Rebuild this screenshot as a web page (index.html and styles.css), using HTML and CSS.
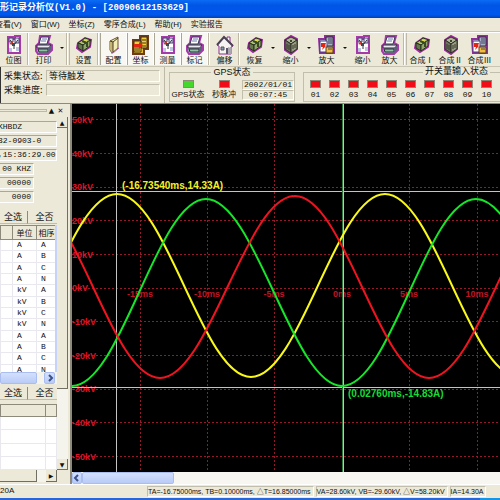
FILE: index.html
```html
<!DOCTYPE html>
<html lang="zh-CN">
<head>
  <meta charset="UTF-8" />
  <meta name="viewport" content="width=device-width, initial-scale=1.0"/>
  <title>波形记录分析仪(V1.0)</title>
  <link rel="stylesheet" href="styles.css">
</head>
<body>

  <!-- Toolbar icons -->
  <svg class="icon-defs" width="0" height="0" aria-hidden="true">
    <symbol id="ic-bitmap" viewBox="0 0 18 20">
      <path d="M3 2h5v2h2V1h5v17H3z" fill="#fff" stroke="#a53aa8" stroke-width="2"/>
      <path d="M4 3h4v4H4zM10 3h4v5h-4z" fill="#dcdff0" stroke="#4a4470"/>
      <path d="M5 5l4 5 4-5M9 9v5" fill="none" stroke="#30343c" stroke-width="1"/>
      <path d="M4 9l4-3v4z" fill="#e03020"/>
      <path d="M7 8h3v3H7z" fill="#3a4c50"/>
      <path d="M11 13h3M11 15h3M4 14h3M4 16h3" stroke="#7a8fc0"/>
    </symbol>
    <symbol id="ic-print" viewBox="0 0 18 20">
      <path d="M5 1h10l-2 7 4 2v5l-4 4H3l-2-3v-5l3-3z" fill="#9aa0b8" stroke="#a53aa8" stroke-width="2"/>
      <path d="M6 2h8l-2 7H4z" fill="#fff" stroke="#3b3558"/>
      <path d="M7 4h5M6 6h5" stroke="#6a79b0"/>
      <path d="M2 10h14l-2 3H2z" fill="#e9e9ef" stroke="#2c2c38"/>
      <path d="M3 14h10v3H4z" fill="#8fc2a0" stroke="#2c2c38"/>
      <path d="M13 13l3-2v4l-3 3z" fill="#596077"/>
    </symbol>
    <symbol id="ic-box" viewBox="0 0 18 20">
      <path d="M3 8l7-5 6 2-1 7-8 5-5-4z" fill="#76905a" stroke="#a62aa8" stroke-width="2"/>
      <path d="M3 8l7-5 6 2-8 5z" fill="#b5c878" stroke="#25301c"/>
      <path d="M3 8l5 2v6l-5-3z" fill="#65774f" stroke="#25301c"/>
      <path d="M8 10l7-5v6l-7 5z" fill="#93a866" stroke="#25301c"/>
      <path d="M7 6l5 2v4" fill="none" stroke="#384a22" stroke-width="2"/>
      <path d="M9 5l3 1" stroke="#f0de48"/>
    </symbol>
    <symbol id="ic-config" viewBox="0 0 18 20">
      <path d="M5 6l8-4v11l-6 5-2-3z" fill="#f3eeb5" stroke="#6b5330" stroke-width="1"/>
      <path d="M5 6l3 1v10l-3-2z" fill="#c4b573"/>
      <path d="M5 6l3 1 5-4M8 7v10" fill="none" stroke="#4a3d28"/>
      <path d="M6 18h2l6-5" fill="none" stroke="#b05ab0"/>
    </symbol>
    <symbol id="ic-axis" viewBox="0 0 18 20">
      <path d="M1 5h7V1h8v13h-4v5H1z" fill="#e4b82c" stroke="#6e3b18" stroke-width="2"/>
      <path d="M9 2h6v11H9zM2 6h7v11H2z" fill="#f5cf3a" stroke="#44301a"/>
      <path d="M10 5h4M10 8h4M10 11h4M3 13h5M3 15h5" stroke="#44301a"/>
      <path d="M2 9h5V7l4 3-4 4v-2H2z" fill="#e32614"/>
    </symbol>
    <symbol id="ic-house" viewBox="0 0 18 20">
      <path d="M1 10l7-8 3 3V2h3v5l3 4-2 1v7H3v-8z" fill="#f5f4f2" stroke="#8e2f96" stroke-width="1"/>
      <path d="M1 10l7-8 9 9" fill="none" stroke="#4a4054" stroke-width="2"/>
      <path d="M12 12l3 1v6h-4z" fill="#aaa7b0"/>
      <path d="M5 12h3v3H5z" fill="#8a96b8" stroke="#555"/>
      <path d="M10 13h2v6h-2z" fill="#5c566a"/>
    </symbol>
    <symbol id="ic-cube" viewBox="0 0 18 20">
      <path d="M3 5l6-4 6 3v10l-6 5-6-4z" fill="#858a72" stroke="#9a2a9c" stroke-width="2"/>
      <path d="M3 5l6-3 6 3-6 4z" fill="#b2b699" stroke="#2c2f24"/>
      <path d="M3 5l6 4v9l-6-4z" fill="#6e735e" stroke="#2c2f24"/>
      <path d="M9 9l6-4v9l-6 4z" fill="#979c80" stroke="#2c2f24"/>
      <path d="M5 9v5M7 10v5M11 10v4M13 9v4" stroke="#34382a"/>
      <path d="M8 5h2v2H8z" fill="#3e4630"/>
    </symbol>
    <symbol id="ic-pages" viewBox="0 0 18 20">
      <path d="M1 4h6V1h9v17H2z" fill="#c7cde3" stroke="#8e2f9a" stroke-width="2"/>
      <path d="M8 2h7v9H8z" fill="#aab2c8" stroke="#2c2c38"/>
      <path d="M2 6h7v11H2z" fill="#fff" stroke="#4a3f80"/>
      <path d="M8 12h7v6H8z" fill="#f2bd3c" stroke="#5d3a20"/>
      <path d="M10 4h4M10 6h4M10 8h4M10 14h4" stroke="#3d4258"/>
      <path d="M3 8h5l-1 3 2-1-5 5 1-3H3z" fill="#e32614"/>
    </symbol>
  </svg>

  <header class="titlebar"><h1>形记录分析仪(V1.0) - [20090612153629]</h1></header>

  <nav class="menubar">
    <a href="#">查看(V)</a>
    <a href="#">窗口(W)</a>
    <a href="#">坐标(Z)</a>
    <a href="#">零序合成(L)</a>
    <a href="#">帮助(H)</a>
    <a href="#">实验报告</a>
  </nav>

  <div class="toolbar">
    <button class="tool"><svg><use href="#ic-bitmap"/></svg>位图</button>
    <i class="sep"></i>
    <button class="tool"><svg><use href="#ic-print"/></svg>打印</button>
    <button class="drop" aria-label="打印选项"></button>
    <i class="sep double"></i>
    <button class="tool"><svg><use href="#ic-box"/></svg>设置</button>
    <i class="sep"></i>
    <button class="tool on"><svg><use href="#ic-config"/></svg>配置</button>
    <button class="tool on"><svg><use href="#ic-axis"/></svg>坐标</button>
    <button class="tool on"><svg><use href="#ic-bitmap"/></svg>测量</button>
    <button class="tool on"><svg><use href="#ic-print"/></svg>标记</button>
    <i class="sep"></i>
    <button class="tool"><svg><use href="#ic-house"/></svg>偏移</button>
    <i class="sep"></i>
    <button class="tool"><svg><use href="#ic-box"/></svg>恢复</button>
    <button class="drop" aria-label="恢复选项"></button>
    <button class="tool"><svg><use href="#ic-cube"/></svg>缩小</button>
    <button class="drop" aria-label="缩小选项"></button>
    <button class="tool"><svg><use href="#ic-pages"/></svg>放大</button>
    <button class="drop" aria-label="放大选项"></button>
    <button class="tool"><svg><use href="#ic-bitmap"/></svg>缩小</button>
    <button class="tool"><svg><use href="#ic-print"/></svg>放大</button>
    <i class="sep double"></i>
    <button class="tool wide"><svg><use href="#ic-box"/></svg>合成Ⅰ</button>
    <button class="tool wide"><svg><use href="#ic-cube"/></svg>合成Ⅱ</button>
    <button class="tool wide"><svg><use href="#ic-pages"/></svg>合成Ⅲ</button>
  </div>

  <section class="infobar">
    <div class="collect">
      <label for="state">采集状态:</label><input id="state" value="等待触发" readonly>
      <label for="progress">采集进度:</label><input id="progress" readonly>
    </div>
    <fieldset class="group gps">
      <legend>GPS状态</legend>
      <div class="lamp"><i class="led green"></i>GPS状态</div>
      <div class="lamp"><i class="led"></i>秒脉冲</div>
      <div class="clock">
        <input value="2002/01/01" aria-label="日期" readonly>
        <input value="00:07:45" aria-label="时间" readonly>
      </div>
    </fieldset>
    <fieldset class="group inputs">
      <legend>开关量输入状态</legend>
      <div class="lamp"><i class="led"></i>01</div>
      <div class="lamp"><i class="led"></i>02</div>
      <div class="lamp"><i class="led"></i>03</div>
      <div class="lamp"><i class="led"></i>04</div>
      <div class="lamp"><i class="led"></i>05</div>
      <div class="lamp"><i class="led"></i>06</div>
      <div class="lamp"><i class="led"></i>07</div>
      <div class="lamp"><i class="led"></i>08</div>
      <div class="lamp"><i class="led"></i>09</div>
      <div class="lamp"><i class="led"></i>10</div>
      <div class="lamp"><i class="led"></i></div>
    </fieldset>
  </section>

  <main class="work">
    <aside class="side">
      <div class="grip"><i></i><button aria-label="折叠">▲</button><button aria-label="关闭">✕</button></div>
      <div class="side-body">
        <div class="side-content">
          <div class="fields">
            <input class="cut" value="KHBDZ" aria-label="站名" readonly>
            <input class="cut" value="32-0903-0" aria-label="编号" readonly>
            <input class="cut" value=",15:36:29.00" aria-label="时间" readonly>
            <input class="short" value="00 KHZ" aria-label="采样频率" readonly>
            <input class="short" value="00000" aria-label="点数" readonly>
            <input class="short" value="0000" aria-label="长度" readonly>
          </div>
          <div class="pick"><button>全选</button><button>全否</button></div>
          <div class="grid-box">
            <table class="channels">
              <thead><tr><th></th><th>单位</th><th>相序</th></tr></thead>
              <tbody>
                <tr><td></td><td>A</td><td>A</td></tr>
                <tr><td></td><td>A</td><td>B</td></tr>
                <tr><td></td><td>A</td><td>C</td></tr>
                <tr><td></td><td>A</td><td>N</td></tr>
                <tr><td></td><td>kV</td><td>A</td></tr>
                <tr><td></td><td>kV</td><td>B</td></tr>
                <tr><td></td><td>kV</td><td>C</td></tr>
                <tr><td></td><td>kV</td><td>N</td></tr>
                <tr><td></td><td>A</td><td>A</td></tr>
                <tr><td></td><td>A</td><td>B</td></tr>
                <tr><td></td><td>A</td><td>C</td></tr>
                <tr><td></td><td>A</td><td>N</td></tr>
              </tbody>
            </table>
          </div>
          <div class="hbar blue"><i></i><button aria-label="向右"><svg viewBox="0 0 8 8"><path d="M3 1l3 3-3 3"/></svg></button></div>
          <div class="pick low"><button>全选</button><button>全否</button></div>
          <table class="switches">
            <thead><tr><th></th><th></th></tr></thead>
            <tbody>
              <tr><td></td><td></td></tr>
              <tr><td></td><td></td></tr>
              <tr><td></td><td></td></tr>
              <tr><td></td><td></td></tr>
            </tbody>
          </table>
          <div class="hbar"><i></i><button aria-label="向右">▶</button></div>
        </div>
        <div class="vbar"><button aria-label="向上">▲</button><i></i><button aria-label="向下">▼</button></div>
      </div>
    </aside>

    <div class="plot">
      <svg class="chart" viewBox="0 0 428 368" preserveAspectRatio="xMinYMin slice">
        <g class="gridlines">
          <path d="M0 15.5H428M0 49.5H428M0 83.5H428M0 116.5H428M0 150.5H428M0 184.5H428M0 217.5H428M0 251.5H428M0 285.5H428M0 318.5H428M0 352.5H428"/>
          <path d="M68.5 0V368M135.5 0V368M202.5 0V368M270.5 0V368M337.5 0V368M405.5 0V368"/>
        </g>
        <g class="axis-y">
          <text x="0" y="19">50kV</text>
          <text x="0" y="53">40kV</text>
          <text x="0" y="86">30kV</text>
          <text x="0" y="120">20kV</text>
          <text x="0" y="154">10kV</text>
          <text x="0" y="187">0kV</text>
          <text x="0" y="221">-10kV</text>
          <text x="0" y="255">-20kV</text>
          <text x="0" y="288">-30kV</text>
          <text x="0" y="322">-40kV</text>
          <text x="0" y="356">-50kV</text>
        </g>
        <g class="axis-x">
          <text x="68" y="193">-15ms</text>
          <text x="135" y="193">-10ms</text>
          <text x="202" y="193">-5ms</text>
          <text x="270" y="193">0ms</text>
          <text x="337" y="193">5ms</text>
          <text x="405" y="193">10ms</text>
        </g>
        <!-- measuring cursors -->
        <path class="cursor" d="M0 87.5H428M0 283.5H428M44.5 0V368"/>
        <path class="cursor-b" d="M270.5 0V368"/>
        <path class="cursor" d="M271.5 0V368"/>
        <!-- phases: half periods of 134 to 135 units -->
        <path class="wave yellow" d="M-89 273C-40 273 -4 90 45 90C94 90 130 273 179 273C228 273 264 90 313 90C362 90 398 273 447 273"/>
        <path class="wave green" d="M0 282C49 282 85 95 134 95C183 95 221 282 270 282C319 282 355 95 404 95C453 95 489 282 538 282"/>
        <path class="wave red" d="M-46 92C3 92 39 274 88 274C137 274 174 92 223 92C272 92 308 274 357 274C406 274 442 92 491 92"/>
        <text class="mark yellow" x="50" y="85">(-16.73540ms,14.33A)</text>
        <text class="mark green" x="276" y="293">(0.02760ms,-14.83A)</text>
      </svg>
      <div class="hscroll">
        <button aria-label="向左"><svg viewBox="0 0 8 8"><path d="M5 1L2 4l3 3"/></svg></button>
        <i></i>
      </div>
    </div>
  </main>

  <footer class="statusbar">
    <span class="first">20A</span>
    <span class="cell">TA=-16.75000ms, TB=0.10000ms, △T=16.85000ms</span>
    <span class="cell">VA=28.60kV, VB=-29.60kV, △V=58.20kV</span>
    <span class="cell">IA=14.30A</span>
  </footer>
  <div class="taskbar"></div>

</body>
</html>
```

FILE: styles.css
```css
* {
  box-sizing: border-box;
}

body {
  margin: 0;
  height: 100vh;
  display: flex;
  flex-direction: column;
  overflow: hidden;
  background: #ece9d8;
  color: #111;
  font-family: "Liberation Mono", "Noto Sans CJK SC", monospace;
  font-size: 9px;
  line-height: 12px;
  white-space: nowrap;
}

button,
input {
  font: inherit;
  color: inherit;
  margin: 0;
  padding: 0;
  border: 0;
  background: none;
  border-radius: 0;
  min-width: 0;
}

.icon-defs {
  position: absolute;
}

/* title and menu */
.titlebar {
  flex: none;
  height: 18px;
  background: linear-gradient(#0a6cf5, #0055e5 30%, #0058ee 80%, #0040b8);
  color: #fff;
}

.titlebar h1 {
  margin: 0;
  font-size: 9px;
  line-height: 16px;
}

.menubar {
  flex: none;
  display: flex;
  gap: 9px;
  height: 14px;
  margin-left: -5px;
  font-family: "Liberation Sans", "Noto Sans CJK SC", sans-serif;
  font-size: 8px;
  line-height: 13px;
  border-bottom: 1px solid #c9c5b2;
}

.menubar a {
  color: inherit;
  text-decoration: none;
}

/* toolbar */
.toolbar {
  flex: none;
  display: flex;
  height: 35px;
  padding-bottom: 1px;
  border-top: 1px solid #fff;
  border-bottom: 1px solid #c9c5b2;
  font-family: "Noto Sans CJK SC", sans-serif;
  font-size: 8px;
}

.tool {
  flex: none;
  width: 27px;
  display: flex;
  flex-direction: column;
  align-items: center;
  line-height: 10px;
  padding-top: 2px;
}

.tool svg {
  flex: none;
  width: 18px;
  height: 20px;
}

.tool.wide {
  width: 29px;
}

.tool.on {
  background: #f8f7f2;
  border-left: 1px solid #a9a694;
  border-right: 1px solid #fff;
}

.drop {
  flex: none;
  width: 9px;
  display: flex;
  align-items: center;
  justify-content: center;
}

.drop::after {
  content: "";
  border: 2px solid transparent;
  border-top-color: #111;
}

.sep {
  flex: none;
  width: 3px;
  border-left: 1px solid #bdb9a6;
  box-shadow: inset 1px 0 #fff;
}

.sep.double {
  width: 4px;
  border-right: 1px solid #bdb9a6;
}

/* acquisition, GPS and input groups */
.infobar {
  flex: none;
  display: flex;
  height: 37px;
  border-bottom: 1px solid #8d8a7c;
}

.collect {
  flex: none;
  width: 165px;
  display: grid;
  grid-template-columns: 40px 1fr;
  gap: 2px;
  align-content: start;
  padding: 3px 4px 0 3px;
  border-left: 1px solid #333;
  border-right: 1px solid #bdb9a6;
  font-family: "Noto Sans CJK SC", sans-serif;
}

.collect input {
  width: 100%;
  height: 12px;
  padding-left: 2px;
  border: 1px solid #c2beac;
  border-right-color: #fff;
  border-bottom-color: #fff;
}

.group {
  flex: none;
  display: flex;
  min-width: 0;
  height: 34px;
  margin: 1px 0 0 4px;
  padding: 3px 0 0;
  border: 1px solid #c2beac;
}

.group legend {
  margin: 0 auto;
  padding: 0 2px;
  height: 9px;
  line-height: 9px;
}

.gps {
  width: 126px;
  font-family: "Liberation Sans", "Noto Sans CJK SC", sans-serif;
}

.gps .lamp {
  width: 36px;
  font-size: 8px;
}

.inputs {
  flex: 1 0 210px;
  margin-left: 8px;
  padding-left: 2px;
  font-family: "Liberation Mono", "Noto Sans CJK SC", monospace;
}

.inputs legend {
  margin-left: 117px;
}

.inputs .lamp {
  width: 19px;
  font-size: 8px;
}

.lamp {
  flex: none;
  display: flex;
  flex-direction: column;
  align-items: center;
  line-height: 10px;
}

.led {
  width: 11px;
  height: 8px;
  margin-bottom: 2px;
  background: #f00d17;
  border: 1px solid #8c8878;
}

.led.green {
  background: #45d82c;
}

.clock {
  flex: 1;
  display: flex;
  flex-direction: column;
  font-family: "Liberation Mono", monospace;
  font-size: 8px;
}

.clock input {
  width: 100%;
  height: 10px;
  text-align: center;
  border: 1px solid #c2beac;
  border-right-color: #fff;
  border-bottom-color: #fff;
}

/* main area */
.work {
  flex: 1;
  min-height: 0;
  display: flex;
}

.side {
  flex: none;
  width: 72px;
  display: flex;
  flex-direction: column;
  border-right: 2px solid #8d8a7c;
  font-size: 8px;
}

.grip {
  flex: none;
  display: flex;
  align-items: center;
  height: 13px;
  font-family: "DejaVu Sans", sans-serif;
  font-size: 7px;
}

.grip i {
  width: 47px;
  height: 3px;
  border: 1px solid #bdb9a6;
  border-left: 0;
}

.grip button {
  width: 9px;
}

.side-body {
  flex: 1;
  min-height: 0;
  display: flex;
}

.side-content {
  width: 57px;
  display: flex;
  flex-direction: column;
  overflow: hidden;
}

.fields {
  display: flex;
  flex-direction: column;
  gap: 2px;
  padding-top: 4px;
}

.fields input {
  width: 100%;
  height: 12px;
  border: 1px solid #aaa797;
  border-left: 0;
  border-right-color: #fff;
  border-bottom-color: #fff;
}

.fields .cut {
  text-indent: -2px;
}

.fields .short {
  width: 34px;
  padding-right: 2px;
  text-align: right;
}

.pick {
  flex: none;
  display: flex;
  height: 13px;
  margin-top: 8px;
  font-family: "Noto Sans CJK SC", sans-serif;
  font-size: 9px;
}

.pick button {
  width: 31px;
  padding-left: 4px;
  text-align: left;
  border-right: 1px solid #8d8a7c;
  border-bottom: 1px solid #c2beac;
}

.pick button + button {
  padding-left: 7px;
  border-right: 0;
}

.pick.low {
  margin-top: 3px;
}

.grid-box {
  flex: none;
  height: 147px;
  margin-top: 1px;
  overflow: hidden;
  border-right: 2px solid #c3d3fb;
  background: #fff;
}

table {
  width: 57px;
  table-layout: fixed;
  border-collapse: collapse;
  background: #fff;
}

th {
  height: 12px;
  padding: 0;
  background: #ece9d8;
  border: 1px solid #8d8a7c;
  font-weight: normal;
  line-height: 10px;
}

td {
  padding: 0 0 0 4px;
  border: 1px solid #e8e8ee;
  line-height: 10px;
}

.channels {
  height: 151px;
}

.channels th {
  height: 14px;
  font-family: "Noto Sans CJK SC", sans-serif;
  overflow: hidden;
}

.channels th:first-child {
  width: 12px;
}

.channels th:nth-child(2) {
  width: 24px;
}

.switches {
  flex: none;
  height: 66px;
  margin-top: 4px;
}

.switches th:first-child {
  width: 45px;
}

.hbar {
  flex: none;
  display: flex;
  justify-content: space-between;
  height: 12px;
  background: #f4f3ec;
}

.hbar i {
  width: 37px;
  background: #ece9d8;
  border-right: 1px solid #716f64;
  border-bottom: 1px solid #716f64;
}

.hbar button {
  width: 11px;
  font-family: "DejaVu Sans", sans-serif;
  font-size: 6px;
  line-height: 10px;
  background: #ece9d8;
  border-right: 1px solid #716f64;
  border-bottom: 1px solid #716f64;
}

.hbar.blue {
  padding-right: 2px;
}

.hbar.blue i,
.hbar.blue button,
.hscroll button,
.hscroll i {
  background: linear-gradient(#d3e0fe, #b9cbf6);
  border: 1px solid #a9bdf0;
  border-radius: 2px;
}

.hbar svg,
.hscroll svg {
  display: block;
  width: 8px;
  height: 8px;
  margin: auto;
  fill: none;
  stroke: #3b5187;
  stroke-width: 2;
}

.vbar {
  width: 11px;
  display: flex;
  flex-direction: column;
  margin-bottom: 14px;
  background: #f4f3ec;
}

.vbar i {
  flex: 1;
  margin-bottom: 70px;
  background: #ece9d8;
  border-right: 1px solid #716f64;
  border-bottom: 1px solid #716f64;
}

.vbar button {
  height: 11px;
  font-family: "DejaVu Sans", sans-serif;
  font-size: 6px;
  line-height: 9px;
  background: #ece9d8;
  border-right: 1px solid #716f64;
  border-bottom: 1px solid #716f64;
}

/* waveform chart */
.plot {
  flex: 1;
  min-width: 0;
  display: flex;
  flex-direction: column;
  background: #000;
}

.chart {
  flex: 1;
  min-height: 0;
  width: 100%;
  display: block;
  font-family: "Liberation Sans", sans-serif;
  font-weight: bold;
  font-size: 9px;
}

.gridlines path {
  fill: none;
  stroke: #98172a;
  stroke-width: 1;
  stroke-dasharray: 2 2;
}

.axis-y {
  fill: #dc1226;
}

.axis-x {
  fill: #c01426;
  text-anchor: middle;
}

.cursor {
  stroke: #c4c4c4;
}

.cursor-b {
  stroke: #2f7a3a;
}

.wave {
  fill: none;
  stroke-width: 2;
}

.wave.yellow {
  stroke: #f8f81c;
}

.wave.green {
  stroke: #16e62a;
}

.wave.red {
  stroke: #f01420;
}

.mark {
  font-size: 10px;
}

.mark.yellow {
  fill: #f4f02c;
}

.mark.green {
  fill: #16dc34;
}

.hscroll {
  flex: none;
  display: flex;
  height: 12px;
  background: #f7f6f0;
}

.hscroll button {
  width: 10px;
}

.hscroll i {
  width: 92px;
}

/* bottom bars */
.statusbar {
  flex: none;
  display: flex;
  gap: 2px;
  height: 14px;
  padding-top: 1px;
  border-top: 1px solid #fff;
  font-family: "Liberation Sans", "Noto Sans CJK SC", sans-serif;
  font-size: 7px;
  line-height: 10px;
}

.first {
  flex: none;
  width: 145px;
  font-size: 8px;
}

.cell {
  flex: none;
  height: 11px;
  padding-right: 2px;
  border: 1px solid #c2beac;
  border-right-color: #fff;
  border-bottom-color: #fff;
}

.taskbar {
  flex: none;
  height: 2px;
  background: linear-gradient(to right, #2a66d8 96%, #1595e8 96%);
}
```
